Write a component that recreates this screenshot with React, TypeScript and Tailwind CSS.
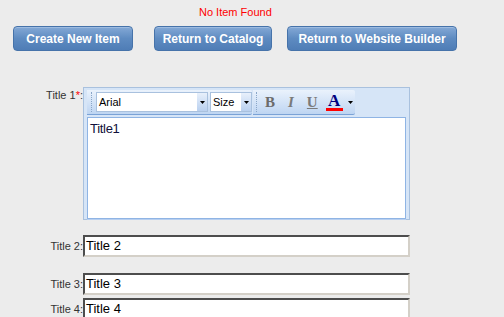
function BlueButton({ label, width }: { label: string; width: string }) {
  return (
    <button
      className={`${width} h-[25px] rounded-[4px] border border-[#4673aa] bg-gradient-to-b from-[#84a9d6] via-[#5e8bc1] to-[#4f7db6] text-[12px] font-bold text-white shadow-[inset_0_1px_0_#9dbbe0]`}
    >
      {label}
    </button>
  );
}

function Grip() {
  return <div className="mx-[3px] h-[20px] w-0 border-l border-dotted border-[#8aa6c8]" />;
}

function DropArrow() {
  return (
    <div className="flex h-full w-[10px] items-center justify-center bg-gradient-to-b from-[#e8f0fb] to-[#b9d0ef]">
      <svg width="5" height="3" viewBox="0 0 5 3">
        <path d="M0 0H5L2.5 3Z" fill="#000" />
      </svg>
    </div>
  );
}

function FieldRow({ label, value, className }: { label: string; value: string; className: string }) {
  return (
    <div className={`flex items-center ${className}`}>
      <div className="w-[83px] text-right text-[11px] text-[#333]">{label}</div>
      <div className="flex h-[22px] w-[327px] items-center border-t-2 border-l-2 border-b-2 border-r-2 border-t-[#4d4d4d] border-l-[#4d4d4d] border-b-[#d4d0c8] border-r-[#d4d0c8] bg-white pl-[1px] text-[13px] text-black">
        {value}
      </div>
    </div>
  );
}

export default function App() {
  return (
    <div className="min-h-[317px] w-[504px] overflow-hidden bg-[#ececec] font-['Liberation_Sans',Arial,sans-serif]">
      <div className="pl-[199px] pt-[6px] text-[11px] leading-[13px] text-[#ff0000]">No Item Found</div>

      {/* action buttons */}
      <div className="mt-[7px] flex pl-[13px]">
        <BlueButton label="Create New Item" width="w-[120px]" />
        <div className="w-[21px]" />
        <BlueButton label="Return to Catalog" width="w-[118px]" />
        <div className="w-[15px]" />
        <BlueButton label="Return to Website Builder" width="w-[170px]" />
      </div>

      {/* Title 1 with rich editor */}
      <div className="mt-[36px] flex">
        <div className="w-[83px] text-right text-[11px] text-[#333]">
          Title 1<span className="text-[#ff0000]">*</span>:
        </div>
        <div className="h-[133px] w-[327px] border border-[#a9c1de] bg-[#d6e5f7] px-[3px] pt-[2px]">
          <div className="flex h-[25px]">
            <div className="flex h-[25px] w-[165px] items-center rounded-r-[2px] border-b border-[#7aa2d6] bg-gradient-to-b from-[#eaf2fc] to-[#bed5f2] pl-[1px]">
              <Grip />
              <div className="ml-[1px] flex h-[20px] w-[112px] border border-[#a9c1de] bg-white">
                <div className="flex-1 pl-[2px] text-[11px] leading-[18px] text-black">Arial</div>
                <DropArrow />
              </div>
              <div className="ml-[2px] flex h-[20px] w-[42px] border border-[#a9c1de] bg-white">
                <div className="flex-1 pl-[2px] text-[11px] leading-[18px] text-black">Size</div>
                <DropArrow />
              </div>
            </div>
            <div className="ml-[1px] flex h-[25px] w-[102px] items-center rounded-r-[2px] border-b border-[#7aa2d6] bg-gradient-to-b from-[#eaf2fc] to-[#bed5f2]">
              <Grip />
              <span className="ml-[5px] font-['Liberation_Serif',serif] text-[15px] font-bold text-[#6b6b6b]">B</span>
              <span className="ml-[13px] font-['Liberation_Serif',serif] text-[15px] font-bold italic text-[#7a7a7a]">I</span>
              <span className="ml-[13px] font-['Liberation_Serif',serif] text-[15px] font-bold text-[#7a7a7a] underline">U</span>
              <div className="ml-[8px] flex flex-col items-center">
                <span className="font-['Liberation_Serif',serif] text-[17px] font-bold leading-[15px] text-[#000080]">A</span>
                <div className="h-[3px] w-[17px] bg-[#ff0000]" />
              </div>
              <svg className="ml-[5px]" width="5" height="3" viewBox="0 0 5 3">
                <path d="M0 0H5L2.5 3Z" fill="#000" />
              </svg>
            </div>
          </div>
          <div className="mt-[2px] h-[102px] w-[319px] border border-[#8fb4e4] bg-white px-[2px] pt-[1px] text-[13px] tracking-[-0.3px] text-[#10103a] shadow-[0_1px_0_#b7cff0]">
            Title1
          </div>
        </div>
      </div>

      <FieldRow label="Title 2:" value="Title 2" className="mt-[15px]" />
      <FieldRow label="Title 3:" value="Title 3" className="mt-[16px]" />
      <FieldRow label="Title 4:" value="Title 4" className="mt-[3px]" />
    </div>
  );
}
